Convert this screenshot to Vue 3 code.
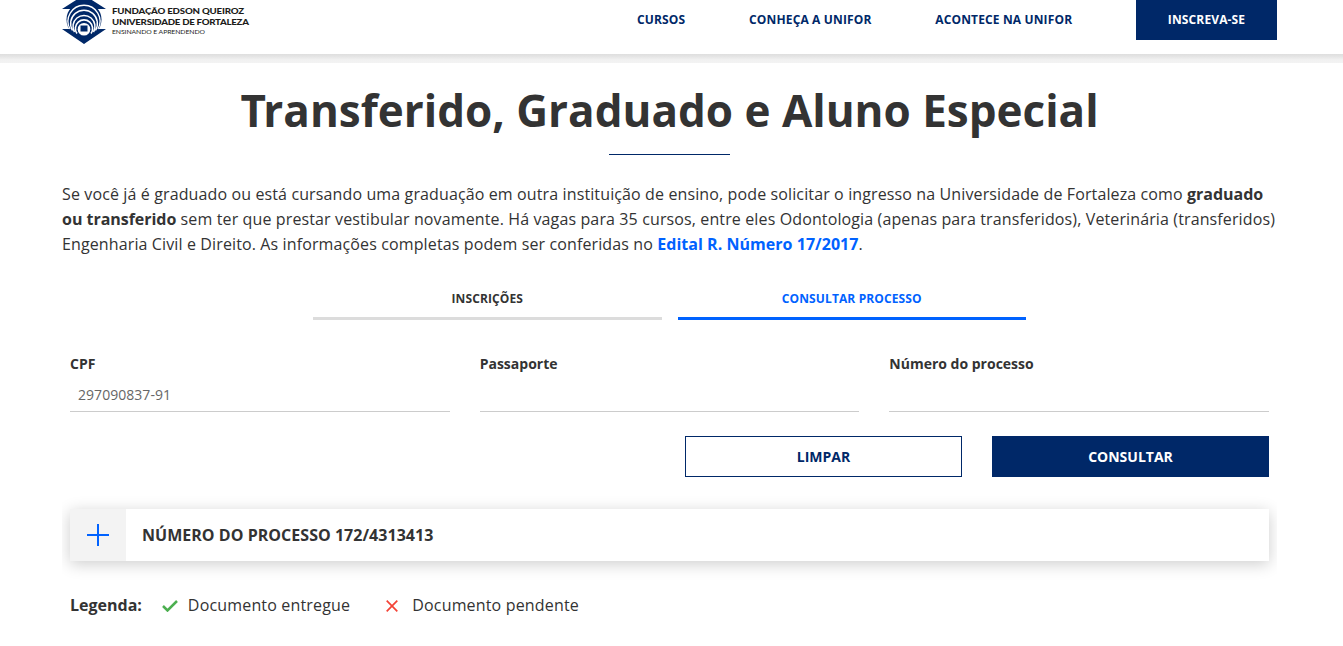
<script setup>
import { ref } from 'vue'

const nav = ['CURSOS', 'CONHEÇA A UNIFOR', 'ACONTECE NA UNIFOR']
const tabs = ['INSCRIÇÕES', 'CONSULTAR PROCESSO']
const activeTab = ref(1)
const fields = ref([
  { id: 'cpf', label: 'CPF', value: '297090837-91' },
  { id: 'passaporte', label: 'Passaporte', value: '' },
  { id: 'processo', label: 'Número do processo', value: '' },
])
function clearFields() {
  fields.value.forEach((f) => { f.value = '' })
}
</script>

<template>
  <div class="page">
    <header class="header">
      <div class="header-inner">
        <svg class="logo" width="200" height="46" viewBox="0 0 200 46">
          <path d="M22 -5 L44 9 H0 Z M0 29 H44 L22 44 Z" fill="#002868" />
          <circle cx="22" cy="19.500" r="17.500" fill="#002868" />
          <g fill="none" stroke="#fff">
            <path d="M8 29 A16 16 0 1 1 36 29" stroke-width="1.300" />
            <path d="M10.500 30.500 A13.400 13.400 0 1 1 33.500 30.500" stroke-width="1.400" />
            <path d="M12.500 32 A11 11 0 1 1 31.500 32" stroke-width="1.500" />
            <path d="M15 33.500 A8.600 8.600 0 1 1 29 33.500" stroke-width="1.600" />
          </g>
          <circle cx="22" cy="29.200" r="6.300" fill="#fff" />
          <rect x="18.500" y="25.500" width="7" height="6" fill="#002868" />
          <g font-family="Lato, sans-serif" fill="#1d1d1b">
            <text transform="translate(50 14) scale(1.180 1)" font-size="8.200" font-weight="900" textLength="111.900">FUNDAÇÃO EDSON QUEIROZ</text>
            <text transform="translate(50 25) scale(1.180 1)" font-size="8.200" font-weight="900" textLength="116.100">UNIVERSIDADE DE FORTALEZA</text>
            <text transform="translate(50 34) scale(1.100 1)" font-size="6.200" textLength="84.500">ENSINANDO E APRENDENDO</text>
          </g>
        </svg>
        <nav class="nav">
          <a v-for="item in nav" :key="item">{{ item }}</a>
          <a class="enroll">INSCREVA-SE</a>
        </nav>
      </div>
    </header>
    <div class="strip"></div>

    <main class="content">
      <h1><span class="initial">T</span>ransferido, Graduado e Aluno Especial</h1>
      <div class="rule"></div>
      <p class="intro">
        Se você já é graduado ou está cursando uma graduação em outra instituição de ensino, pode solicitar o ingresso na Universidade de Fortaleza como <strong>graduado<br>ou transferido</strong> sem ter que prestar vestibular novamente. Há vagas para 35 cursos, entre eles Odontologia (apenas para transferidos), Veterinária (transferidos)<br>Engenharia Civil e Direito. As informações completas podem ser conferidas no <a>Edital R. Número 17/2017</a>.
      </p>

      <div class="tabs">
        <button v-for="(tab, i) in tabs" :key="tab" class="tab" :class="{ active: i === activeTab }" @click="activeTab = i">{{ tab }}</button>
      </div>

      <div class="panel">
        <div class="fields">
          <div v-for="f in fields" :key="f.id" class="field">
            <label :for="f.id">{{ f.label }}</label>
            <input :id="f.id" v-model="f.value" type="text">
          </div>
        </div>
        <div class="actions">
          <button class="btn" @click="clearFields">LIMPAR</button>
          <button class="btn primary">CONSULTAR</button>
        </div>
        <div class="process">
          <div class="toggle">
            <svg width="22" height="22" viewBox="0 0 22 22"><path d="M11 0V22M0 11H22" stroke="#0062ff" stroke-width="2" /></svg>
          </div>
          <span class="process-title">NÚMERO DO PROCESSO 172/4313413</span>
        </div>
        <div class="legend">
          <strong>Legenda:</strong>
          <svg class="check" width="16" height="12" viewBox="0 0 16 12"><path d="M1 6L5.500 10.500L15 1" fill="none" stroke="#4caf50" stroke-width="2.500" /></svg>
          <span class="delivered">Documento entregue</span>
          <svg class="cross" width="12" height="12" viewBox="0 0 12 12"><path d="M0.700 0.700L11.300 11.300M11.300 0.700L0.700 11.300" stroke="#f44336" stroke-width="1.700" /></svg>
          <span>Documento pendente</span>
        </div>
      </div>
    </main>
  </div>
</template>

<style>
body { background: #fff; overflow: hidden; }
</style>

<style scoped>
.page {
  height: 646px;
  overflow: hidden;
  font-family: "Open Sans", sans-serif;
  font-size: 16px;
  color: #333;
}
.page * { box-sizing: border-box; }
button, input { font-family: inherit; border-radius: 0; }
button { cursor: pointer; }
.header { height: 54px; background: #fff; }
.header-inner, .content { width: 1215px; margin-left: 62px; }
.header-inner { display: flex; justify-content: space-between; }
.logo { display: block; }
.nav {
  display: flex;
  gap: 63.8px;
  height: 40px;
  line-height: 40px;
  font-size: 12px;
  font-weight: 700;
  letter-spacing: 0.14px;
  color: #002868;
}
.enroll { width: 141px; text-align: center; background: #002868; color: #fff; }
.strip { height: 9px; background: linear-gradient(#dedede, #e3e3e3 22%, #f1f1f1 65%, #f3f3f3); }
h1 {
  margin: 0;
  padding-top: 16px;
  height: 91px;
  line-height: 62px;
  font-size: 44px;
  font-weight: 700;
  text-align: center;
  white-space: nowrap;
}
.initial { letter-spacing: -2.5px; }
.rule { width: 121px; height: 1px; margin: 0 auto; background: #002868; }
.intro { margin: 27px 0 0; line-height: 25px; white-space: nowrap; letter-spacing: 0.123px; }
.intro a { color: #0062ff; font-weight: 700; }
.intro a { letter-spacing: 0.03px; }
.intro strong { letter-spacing: -0.03px; }
.tabs { display: flex; gap: 16px; width: 713px; margin: 23px 0 0 251px; }
.tab {
  flex: 1;
  height: 40px;
  padding: 0;
  border: 0;
  border-bottom: 3px solid #dcdcdc;
  background: none;
  font-size: 12px;
  font-weight: 700;
  letter-spacing: 0.12px;
  color: #333;
}
.tab.active { border-color: #0062ff; color: #0062ff; }
.panel { overflow: hidden; padding: 34px 8px 0; }
.fields { display: grid; grid-template-columns: repeat(3, 1fr); gap: 30px; }
.field label { display: block; height: 20px; line-height: 20px; font-size: 14px; font-weight: 700; }
.field input {
  display: block;
  width: 100%;
  height: 38px;
  margin: 0;
  padding: 4px 8px 0;
  border: 0;
  border-bottom: 1px solid #ccc;
  outline: 0;
  background: none;
  font-size: 14px;
  letter-spacing: 0.04px;
  color: #666;
}
.actions { display: flex; justify-content: flex-end; gap: 30px; margin-top: 24px; }
.btn {
  width: 277px;
  height: 41px;
  padding: 0;
  border: 1px solid #002868;
  background: #fff;
  font-size: 14px;
  font-weight: 700;
  color: #002868;
}
.btn.primary { background: #002868; color: #fff; }
.process {
  display: flex;
  align-items: center;
  height: 52px;
  margin-top: 32px;
  background: #fff;
  box-shadow: 0 3px 15px rgba(0, 0, 0, 0.2);
}
.toggle { display: flex; align-items: center; justify-content: center; width: 56px; height: 52px; background: #f3f3f3; }
.toggle svg { display: block; }
.process-title { margin-left: 16px; font-weight: 700; letter-spacing: 0.03px; }
.legend { display: flex; align-items: center; height: 24px; margin: 32px 0 20px; }
.legend span { letter-spacing: 0.17px; }
.check { margin: 2px 10px 0 20px; }
.delivered { margin-right: 36px; }
.cross { margin: 2px 14px 0 0; }
</style>
